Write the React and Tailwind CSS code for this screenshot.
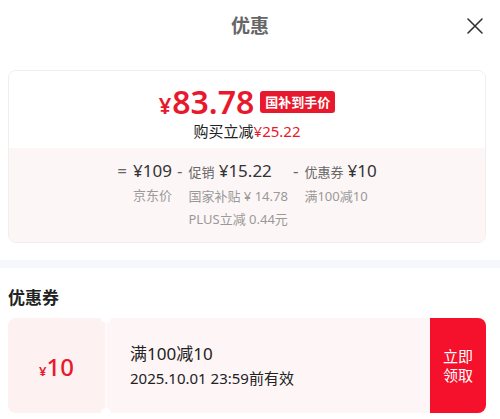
import React from 'react';

const font = { fontFamily: '"Noto Sans", "Noto Sans CJK SC", sans-serif' };

const CloseIcon = () => (
  <svg width="18" height="18" viewBox="0 0 18 18" fill="none" stroke="#333" strokeWidth="1.6" strokeLinecap="round">
    <path d="M2 2L16 16M16 2L2 16" />
  </svg>
);

const App = () => {
  return (
    <div className="w-[500px] h-[419px] bg-white overflow-hidden" style={font}>
      {/* header */}
      <div className="h-[52px] flex items-center justify-center relative">
        <span className="text-[19px] font-bold text-[#666]">优惠</span>
        <button className="absolute right-[16px] top-[17px]">
          <CloseIcon />
        </button>
      </div>

      <div className="pl-2 pr-[14px] mt-[18px]">
        <div className="rounded-lg border border-[#f0eeee] overflow-hidden">
          <div className="bg-white pt-[13px] pb-[6px] flex flex-col items-center">
            <div className="h-[36px] flex items-baseline">
              <span className="text-[#e8192c] font-semibold text-[22px] leading-[36px]">¥</span>
              <span className="text-[#e8192c] font-semibold text-[32px] leading-[36px] ml-[1px]">83.78</span>
              <span className="ml-[6px] self-center bg-[#e8192c] text-white font-bold text-[13px] leading-[22px] px-[5px] rounded-[3px]">国补到手价</span>
            </div>
            <div className="text-[15px] leading-[22px] text-[#222]">
              购买立减<span className="text-[#e8192c]">¥25.22</span>
            </div>
          </div>

          <div className="bg-[#fdf6f6] pt-[10px] pb-[11px] flex justify-center gap-[5px]">
            <div className="flex">
              <span className="text-[17px] leading-[26px] text-[#666] mr-[6px]">=</span>
              <div className="flex flex-col">
                <span className="text-[17px] leading-[26px] text-[#333]">¥109</span>
                <span className="text-[13px] leading-[23px] text-[#999]">京东价</span>
              </div>
            </div>
            <div className="flex">
              <span className="text-[17px] leading-[26px] text-[#666] mr-[6px]">-</span>
              <div className="flex flex-col">
                <span className="leading-[26px] text-[#333]">
                  <span className="text-[13px] text-[#666]">促销</span>{' '}
                  <span className="text-[17px]">¥15.22</span>
                </span>
                <span className="text-[13px] leading-[23px] text-[#999]">国家补贴 ¥ 14.78</span>
                <span className="text-[13px] leading-[23px] text-[#999]">PLUS立减 0.44元</span>
              </div>
            </div>
            <div className="flex">
              <span className="text-[17px] leading-[26px] text-[#666] mr-[6px]">-</span>
              <div className="flex flex-col">
                <span className="leading-[26px] text-[#333]">
                  <span className="text-[13px] text-[#666]">优惠券</span>{' '}
                  <span className="text-[17px]">¥10</span>
                </span>
                <span className="text-[13px] leading-[23px] text-[#999]">满100减10</span>
              </div>
            </div>
          </div>
        </div>
      </div>

      <div className="mt-[17px] h-[8px] bg-[#f6f7fb]" />

      <div className="pl-2 pr-[14px]">
        <div className="mt-[18px] text-[17px] leading-[24px] font-bold text-[#222]">优惠券</div>

        <div className="mt-[8px] h-[95px] flex">
          <div className="w-[97px] bg-[#fdf1f2] rounded-l-lg flex items-baseline justify-center pt-[31px]">
            <span className="text-[#e8192c] text-[13px] font-semibold">¥</span>
            <span className="text-[#e8192c] text-[24px] font-medium">10</span>
          </div>
          <div className="w-[2px] relative bg-[#fefafa]">
            <div className="absolute left-[-4px] top-[-5px] w-[10px] h-[10px] rounded-full bg-white" />
            <div className="absolute left-[-4px] bottom-[-5px] w-[10px] h-[10px] rounded-full bg-white" />
          </div>
          <div className="flex-1 bg-[#fdf5f6] flex flex-col justify-center pl-[23px]">
            <span className="text-[17px] leading-[25px] text-[#222]">满100减10</span>
            <span className="text-[15px] leading-[25px] text-[#222]">2025.10.01 23:59前有效</span>
          </div>
          <div className="w-[56px] bg-[#f5102b] rounded-r-lg flex items-center justify-center">
            <span className="text-white text-[15px] leading-[19px] text-center">立即<br />领取</span>
          </div>
        </div>
      </div>
    </div>
  );
};

export default App;
